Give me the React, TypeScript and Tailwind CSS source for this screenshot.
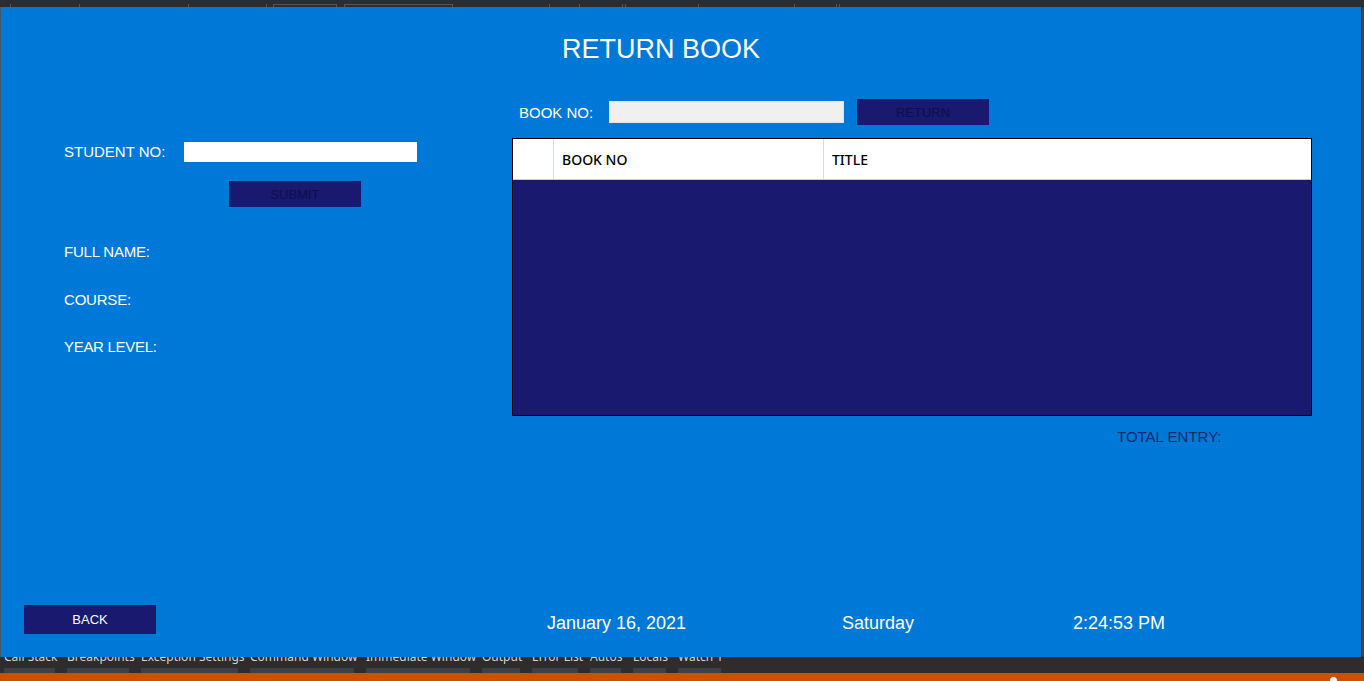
import React from 'react'

// Windows-Forms "RETURN BOOK" window captured over a Visual Studio session

const dockTabs = [
  { label: 'Call Stack', w: 'w-[51px]' },
  { label: 'Breakpoints', w: 'w-[62px]' },
  { label: 'Exception Settings', w: 'w-[97px]' },
  { label: 'Command Window', w: 'w-[104px]' },
  { label: 'Immediate Window', w: 'w-[104px]' },
  { label: 'Output', w: 'w-[38px]' },
  { label: 'Error List', w: 'w-[46px]' },
  { label: 'Autos', w: 'w-[31px]' },
  { label: 'Locals', w: 'w-[33px]' },
  { label: 'Watch 1', w: 'w-[43px]' },
]

function TopStrip() {
  // bits of the VS toolbar peeking out above the form
  const tick = 'w-px h-[3px] bg-[#55555c]'
  return (
    <div className="h-[7px] flex items-end">
      <div className={`ml-[10px] ${tick}`} />
      <div className={`ml-[68px] ${tick}`} />
      <div className={`ml-[108px] ${tick}`} />
      <div className={`ml-[77px] ${tick}`} />
      <div className="ml-[6px] w-[64px] h-[3px] border border-b-0 border-[#55555c]" />
      <div className="ml-[7px] w-[109px] h-[3px] border border-b-0 border-[#55555c]" />
      <div className={`ml-[96px] ${tick}`} />
      <div className={`ml-[29px] ${tick}`} />
      <div className={`ml-[42px] ${tick}`} />
      <div className={`ml-[2px] ${tick}`} />
      <div className={`ml-[72px] ${tick}`} />
      <div className={`ml-[95px] ${tick}`} />
      <div className={`ml-[41px] ${tick}`} />
      <div className={`ml-[2px] ${tick}`} />
    </div>
  )
}

function DockTabs() {
  // tool-window tabs, mostly hidden behind the form
  return (
    <div className="h-[16px] overflow-hidden flex gap-[12px] pl-[4px] font-['Noto_Sans',sans-serif]">
      {dockTabs.map((t) => (
        <div key={t.label} className={`${t.w} flex flex-col`}>
          <div className="h-[11px]">
            <div className="-mt-[8px] text-[12px] leading-[16px] text-[#d4d4d4] whitespace-nowrap">
              {t.label}
            </div>
          </div>
          <div className="h-[5px] bg-[#3f3f46]" />
        </div>
      ))}
    </div>
  )
}

function NavyButton({ label, className = '' }: { label: string; className?: string }) {
  return (
    <button
      type="button"
      className={`w-[132px] bg-[#191970] text-[13px] leading-none flex items-center justify-center ${className}`}
    >
      {label}
    </button>
  )
}

export default function App() {
  return (
    <div className="w-[1364px] h-[681px] bg-[#2d2d30] flex flex-col overflow-hidden font-['Liberation_Sans',Arial,sans-serif]">
      <TopStrip />

      <div className="flex h-[650px]">
        <div className="w-px bg-[#4a5563]" />

        <main className="w-[1360px] bg-[#0078d7] flex flex-col text-white">
          {/* 标题 */}
          <h1 className="pt-[26px] pl-[561px] text-[27px] leading-[32px] font-normal">RETURN BOOK</h1>

          <div className="flex">
            {/* 学生信息 */}
            <div className="w-[511px] pl-[63px] pt-[77px] flex flex-col items-start text-[15px] leading-[20px]">
              <div className="flex items-center h-[20px]">
                <span className="w-[120px]">STUDENT NO:</span>
                <div className="w-[233px] h-[20px] bg-white" />
              </div>
              <NavyButton label="SUBMIT" className="mt-[19px] ml-[165px] h-[26px] text-[#0e0e4c]" />
              <div className="mt-[35px] tracking-[-0.2px]">FULL NAME:</div>
              <div className="mt-[28px] tracking-[-0.2px]">COURSE:</div>
              <div className="mt-[27px] tracking-[-0.3px]">YEAR LEVEL:</div>
            </div>

            {/* 借阅列表 */}
            <div className="w-[800px] pt-[34px] flex flex-col">
              <div className="flex items-start h-[26px]">
                <span className="mt-[4px] ml-[7px] w-[90px] text-[15px] leading-[20px]">BOOK NO:</span>
                <div className="mt-[2px] w-[235px] h-[22px] bg-[#f0f0f0] border border-[#dbe4ec]" />
                <NavyButton label="RETURN" className="ml-[13px] h-[26px] text-[#0e0e4c]" />
              </div>

              <div className="mt-[13px] w-[800px] h-[278px] border border-black flex flex-col">
                <div className="h-[41px] bg-white flex border-b border-[#c3d0dc] text-black font-['Noto_Sans',sans-serif] font-medium text-[14px]">
                  <div className="w-[41px] border-r border-[#d3dce5]" />
                  <div className="w-[270px] border-r border-[#d3dce5] pl-[8px] flex items-center">BOOK NO</div>
                  <div className="flex-1 pl-[8px] flex items-center">TITLE</div>
                </div>
                <div className="flex-1 bg-[#191970]" />
              </div>

              <div className="mt-[11px] ml-[605px] text-[15px] leading-[20px] text-[#0b2b66]">TOTAL ENTRY:</div>
            </div>
          </div>

          <div className="flex-1" />

          {/* 底部：返回 + 日期时间 */}
          <div className="flex items-start pl-[23px] pb-[23px]">
            <NavyButton label="BACK" className="h-[29px] text-white" />
            <div className="ml-[391px] w-[295px] mt-[8px] text-[18px] leading-[20px]">January 16, 2021</div>
            <div className="w-[231px] mt-[8px] text-[18px] leading-[20px]">Saturday</div>
            <div className="mt-[8px] text-[18px] leading-[20px]">2:24:53 PM</div>
          </div>
        </main>

        <div className="w-[3px] bg-[#44444b] border-l border-[#2a2a2e]" />
      </div>

      <DockTabs />

      <div className="h-[8px] bg-[#ca5100] overflow-hidden">
        <div className="ml-[1330px] mt-[4px] w-[7px] h-[7px] rounded-full bg-[#f3f3f3]" />
      </div>
    </div>
  )
}
